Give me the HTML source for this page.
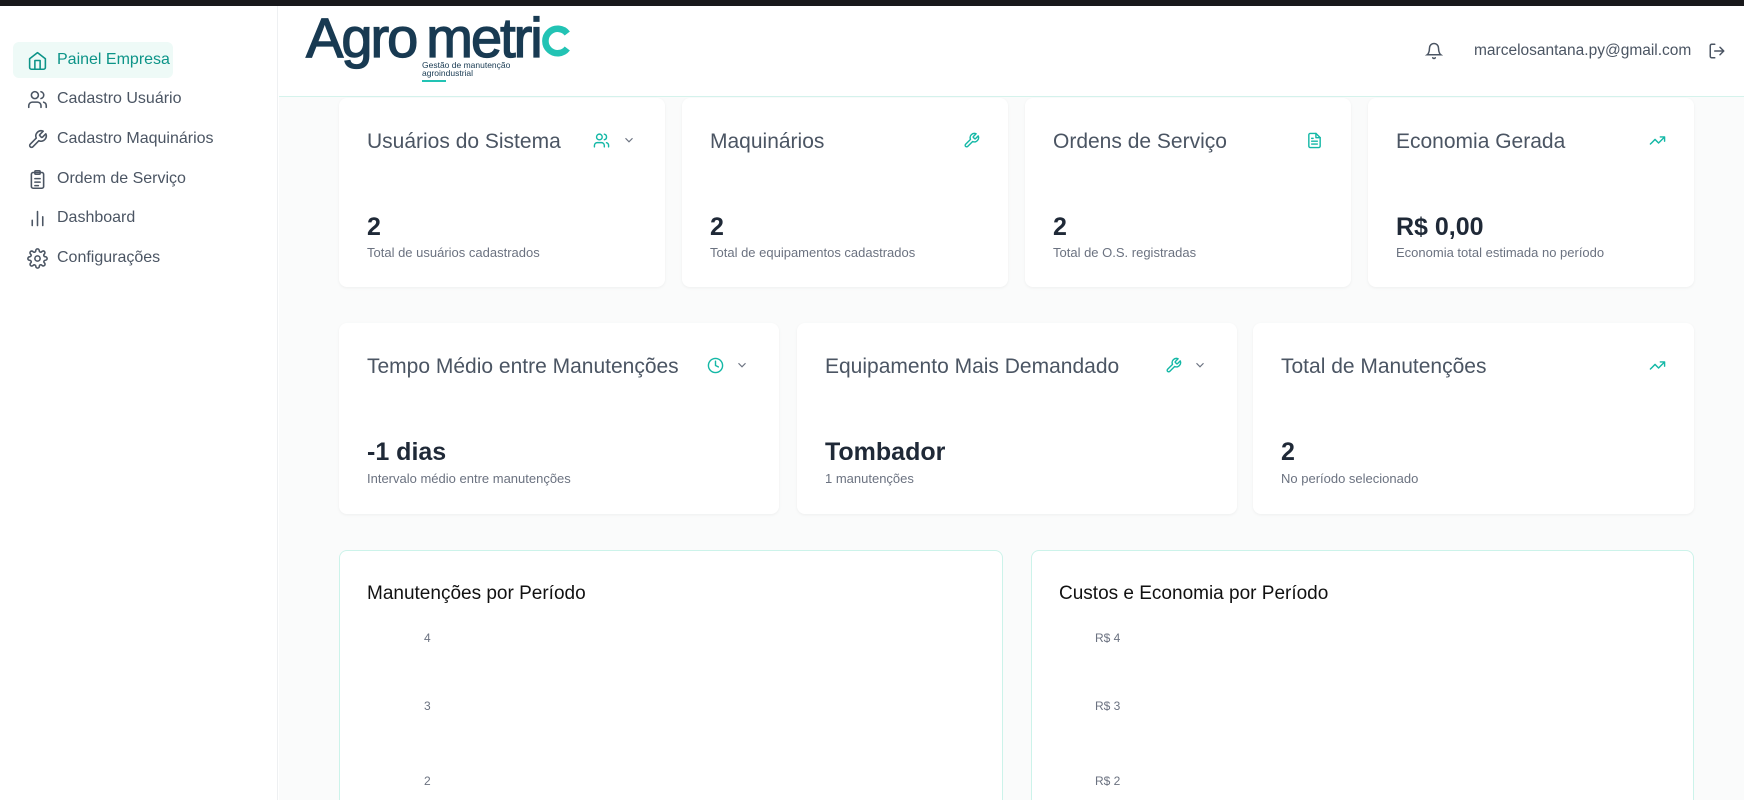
<!DOCTYPE html>
<html style="width:1744px;height:800px;overflow:hidden"><head><meta charset="utf-8"><style>
*{margin:0;padding:0;box-sizing:border-box}
body{width:1744px;height:800px;overflow:hidden;background:#fff;font-family:"Liberation Sans",sans-serif;position:relative;color:#4b5563}
.a{position:absolute}
.top{left:0;top:0;width:1744px;height:6px;background:#18181b}
.side{left:0;top:6px;width:278px;height:794px;border-right:1px solid #eef0f2;background:#fff}
.nav{position:absolute;left:27px;font-size:16px;color:#4b5563;display:flex;align-items:center;gap:9px;height:24px}
.nav svg{width:21px;height:21px;fill:none;stroke:#4b5563;stroke-width:1.8;stroke-linecap:round;stroke-linejoin:round}
.hl{left:13px;top:42px;width:160px;height:36px;background:#eefaf7;border-radius:6px}
.main{left:279px;top:97px;width:1465px;height:703px;background:#fafbfb}
.hdr{left:279px;top:6px;width:1465px;height:91px;background:#fff;border-bottom:1px solid #d5f3ec}
.card{position:absolute;background:#fff;border-radius:8px;box-shadow:0 1px 3px rgba(0,0,0,.05)}
.card .t{position:absolute;left:28px;font-size:21px;color:#4b5563}
.card .v{position:absolute;left:28px;font-size:25px;font-weight:bold;color:#1f2937}
.card .s{position:absolute;left:28px;font-size:13px;color:#6b7280}
.ic{position:absolute;width:17px;height:17px;fill:none;stroke:#14b8a6;stroke-width:2;stroke-linecap:round;stroke-linejoin:round}
.chev{position:absolute;width:14px;height:14px;fill:none;stroke:#6b7280;stroke-width:2}
.chart{position:absolute;background:#fff;border:1px solid #ccf3ea;border-radius:8px;top:550px;height:250px;border-bottom:none;border-bottom-left-radius:0;border-bottom-right-radius:0}
.chart .t{position:absolute;left:27px;top:32px;font-size:19px;color:#111}
.chart .y{position:absolute;font-size:12px;color:#6b7280}
</style></head><body>
<div class="a top"></div>
<div class="a main"></div>
<div class="a hdr"></div>
<div class="a side"></div>
<div class="a hl"></div>

<div class="nav" style="top:48px;color:#0d9488"><svg viewBox="0 0 24 24" style="stroke:#0d9488"><path d="M3 10l9-7 9 7v10a2 2 0 0 1-2 2H5a2 2 0 0 1-2-2z"/><path d="M9 22V12h6v10"/></svg>Painel Empresa</div>
<div class="nav" style="top:87px"><svg viewBox="0 0 24 24"><circle cx="9" cy="7" r="4"/><path d="M2 21v-2a4 4 0 0 1 4-4h6a4 4 0 0 1 4 4v2"/><path d="M16 3.1a4 4 0 0 1 0 7.8M22 21v-2a4 4 0 0 0-3-3.9"/></svg>Cadastro Usuário</div>
<div class="nav" style="top:127px"><svg viewBox="0 0 24 24"><path d="M14.7 6.3a1 1 0 0 0 0 1.4l1.6 1.6a1 1 0 0 0 1.4 0l3.8-3.8a6 6 0 0 1-7.9 7.9l-6.9 6.9a2.1 2.1 0 0 1-3-3l6.9-6.9a6 6 0 0 1 7.9-7.9z"/></svg>Cadastro Maquinários</div>
<div class="nav" style="top:167px"><svg viewBox="0 0 24 24"><rect x="5" y="4" width="14" height="18" rx="2"/><rect x="9" y="2" width="6" height="4" rx="1"/><path d="M9 11h6M9 15h6M9 19h4"/></svg>Ordem de Serviço</div>
<div class="nav" style="top:206px"><svg viewBox="0 0 24 24"><path d="M6 20v-6M12 20V4M18 20v-10"/></svg>Dashboard</div>
<div class="nav" style="top:246px"><svg viewBox="0 0 24 24"><circle cx="12" cy="12" r="3"/><path d="M19.4 15a1.7 1.7 0 0 0 .3 1.8l.1.1a2 2 0 1 1-2.8 2.8l-.1-.1a1.7 1.7 0 0 0-1.8-.3 1.7 1.7 0 0 0-1 1.5V21a2 2 0 1 1-4 0v-.1a1.7 1.7 0 0 0-1.1-1.5 1.7 1.7 0 0 0-1.8.3l-.1.1a2 2 0 1 1-2.8-2.8l.1-.1a1.7 1.7 0 0 0 .3-1.8 1.7 1.7 0 0 0-1.5-1H3a2 2 0 1 1 0-4h.1a1.7 1.7 0 0 0 1.5-1.1 1.7 1.7 0 0 0-.3-1.8l-.1-.1a2 2 0 1 1 2.8-2.8l.1.1a1.7 1.7 0 0 0 1.8.3H9a1.7 1.7 0 0 0 1-1.5V3a2 2 0 1 1 4 0v.1a1.7 1.7 0 0 0 1 1.5 1.7 1.7 0 0 0 1.8-.3l.1-.1a2 2 0 1 1 2.8 2.8l-.1.1a1.7 1.7 0 0 0-.3 1.8V9a1.7 1.7 0 0 0 1.5 1H21a2 2 0 1 1 0 4h-.1a1.7 1.7 0 0 0-1.5 1z"/></svg>Configurações</div>

<!-- logo -->
<div class="a" style="left:306px;top:3px;font-size:56px;color:#183a52;letter-spacing:-2px;line-height:70px;-webkit-text-stroke:1.3px #183a52">Agro<span style="margin-left:10px">metri</span></div>
<svg class="a" style="left:540px;top:25px" width="32" height="32" viewBox="0 0 34 34"><path d="M29 9A13 13 0 1 0 29 25" fill="none" stroke="#22c3b4" stroke-width="7"/></svg>
<div class="a" style="left:422px;top:61px;font-size:8.5px;color:#183a52;line-height:8px">Gestão de manutenção<br>agroindustrial</div>
<div class="a" style="left:422px;top:80px;width:24px;height:2px;background:#22c3b4"></div>

<svg class="a" style="left:1425px;top:42px" width="18" height="18" viewBox="0 0 24 24" fill="none" stroke="#4b5563" stroke-width="2" stroke-linecap="round"><path d="M6 8a6 6 0 0 1 12 0c0 7 3 9 3 9H3s3-2 3-9"/><path d="M10.3 21a1.9 1.9 0 0 0 3.4 0"/></svg>
<div class="a" style="left:1474px;top:42px;font-size:15.5px;color:#4b5563">marcelosantana.py@gmail.com</div>
<svg class="a" style="left:1708px;top:42px" width="18" height="18" viewBox="0 0 24 24" fill="none" stroke="#4b5563" stroke-width="2" stroke-linecap="round" stroke-linejoin="round"><path d="M9 21H5a2 2 0 0 1-2-2V5a2 2 0 0 1 2-2h4M16 17l5-5-5-5M21 12H9"/></svg>

<!-- row1 -->
<div class="card" style="left:339px;top:98px;width:326px;height:189px">
<div class="t" style="top:32px">Usuários do Sistema</div>
<svg class="ic" style="left:254px;top:34px" viewBox="0 0 24 24"><circle cx="9" cy="7" r="4"/><path d="M2 21v-2a4 4 0 0 1 4-4h6a4 4 0 0 1 4 4v2M16 3.1a4 4 0 0 1 0 7.8M22 21v-2a4 4 0 0 0-3-3.9"/></svg>
<svg class="chev" style="left:283px;top:35px" viewBox="0 0 24 24"><path d="M6 9l6 6 6-6"/></svg>
<div class="v" style="top:115px">2</div><div class="s" style="top:147px">Total de usuários cadastrados</div></div>
<div class="card" style="left:682px;top:98px;width:326px;height:189px">
<div class="t" style="top:32px">Maquinários</div>
<svg class="ic" style="left:281px;top:34px" viewBox="0 0 24 24"><path d="M14.7 6.3a1 1 0 0 0 0 1.4l1.6 1.6a1 1 0 0 0 1.4 0l3.8-3.8a6 6 0 0 1-7.9 7.9l-6.9 6.9a2.1 2.1 0 0 1-3-3l6.9-6.9a6 6 0 0 1 7.9-7.9z"/></svg>
<div class="v" style="top:115px">2</div><div class="s" style="top:147px">Total de equipamentos cadastrados</div></div>
<div class="card" style="left:1025px;top:98px;width:326px;height:189px">
<div class="t" style="top:32px">Ordens de Serviço</div>
<svg class="ic" style="left:281px;top:34px" viewBox="0 0 24 24"><path d="M14 2H6a2 2 0 0 0-2 2v16a2 2 0 0 0 2 2h12a2 2 0 0 0 2-2V8z"/><path d="M14 2v6h6M8 13h8M8 17h8M8 9h2"/></svg>
<div class="v" style="top:115px">2</div><div class="s" style="top:147px">Total de O.S. registradas</div></div>
<div class="card" style="left:1368px;top:98px;width:326px;height:189px">
<div class="t" style="top:32px">Economia Gerada</div>
<svg class="ic" style="left:281px;top:34px" viewBox="0 0 24 24"><path d="M22 7l-8.5 8.5-5-5L2 17M16 7h6v6"/></svg>
<div class="v" style="top:115px">R$ 0,00</div><div class="s" style="top:147px">Economia total estimada no período</div></div>

<!-- row2 -->
<div class="card" style="left:339px;top:323px;width:440px;height:191px">
<div class="t" style="top:32px">Tempo Médio entre Manutenções</div>
<svg class="ic" style="left:368px;top:34px" viewBox="0 0 24 24"><circle cx="12" cy="12" r="10"/><path d="M12 6v6l4 2"/></svg>
<svg class="chev" style="left:396px;top:35px" viewBox="0 0 24 24"><path d="M6 9l6 6 6-6"/></svg>
<div class="v" style="top:115px">-1 dias</div><div class="s" style="top:148px">Intervalo médio entre manutenções</div></div>
<div class="card" style="left:797px;top:323px;width:440px;height:191px">
<div class="t" style="top:32px">Equipamento Mais Demandado</div>
<svg class="ic" style="left:368px;top:34px" viewBox="0 0 24 24"><path d="M14.7 6.3a1 1 0 0 0 0 1.4l1.6 1.6a1 1 0 0 0 1.4 0l3.8-3.8a6 6 0 0 1-7.9 7.9l-6.9 6.9a2.1 2.1 0 0 1-3-3l6.9-6.9a6 6 0 0 1 7.9-7.9z"/></svg>
<svg class="chev" style="left:396px;top:35px" viewBox="0 0 24 24"><path d="M6 9l6 6 6-6"/></svg>
<div class="v" style="top:115px">Tombador</div><div class="s" style="top:148px">1 manutenções</div></div>
<div class="card" style="left:1253px;top:323px;width:441px;height:191px">
<div class="t" style="top:32px">Total de Manutenções</div>
<svg class="ic" style="left:396px;top:34px" viewBox="0 0 24 24"><path d="M22 7l-8.5 8.5-5-5L2 17M16 7h6v6"/></svg>
<div class="v" style="top:115px">2</div><div class="s" style="top:148px">No período selecionado</div></div>

<!-- charts -->
<div class="chart" style="left:339px;width:664px">
<div class="t">Manutenções por Período</div>
<div class="y" style="left:84px;top:80px">4</div>
<div class="y" style="left:84px;top:148px">3</div>
<div class="y" style="left:84px;top:223px">2</div></div>
<div class="chart" style="left:1031px;width:663px">
<div class="t">Custos e Economia por Período</div>
<div class="y" style="left:63px;top:80px">R$ 4</div>
<div class="y" style="left:63px;top:148px">R$ 3</div>
<div class="y" style="left:63px;top:223px">R$ 2</div></div>
</body></html>
